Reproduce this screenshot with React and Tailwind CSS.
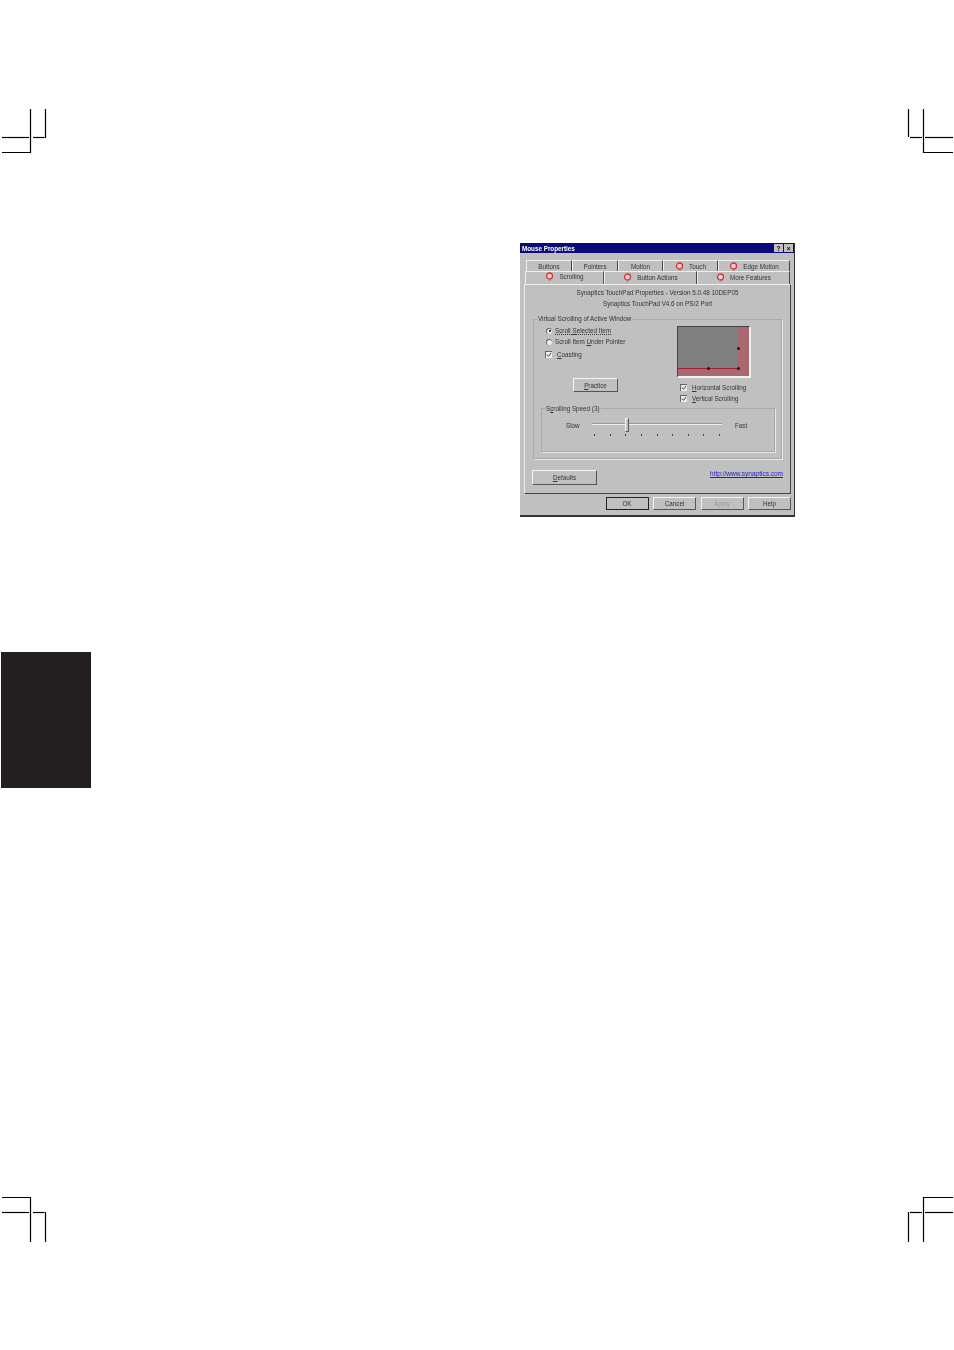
import React from "react";

const font = { fontFamily: '"Liberation Sans", Arial, sans-serif' };

const raised = "bg-[#c0c0c0] border border-t-[#f4f4f4] border-l-[#f4f4f4] border-r-[#555] border-b-[#555]";

function CropMarks() {
  // registration marks in the four page corners
  const lines = [
    "M30.5 109V152.5H2", "M2 137.5H29", "M33 137.5H44.5", "M45.5 109V138",
    "M908.5 109V137", "M910 137.5H922", "M925 137.5H953", "M923.5 109V152.5H953",
    "M2 1197.5H30.5V1242", "M2 1212.5H29", "M33 1212.5H44.5", "M45.5 1212V1242",
    "M953 1197.5H923.5V1242", "M925 1212.5H953", "M910 1212.5H922", "M908.5 1212V1242",
  ];
  return (
    <svg className="absolute top-0 left-0" width="954" height="1350" fill="none" stroke="#000" strokeWidth="1.2">
      {lines.map((d) => (
        <path key={d} d={d} />
      ))}
    </svg>
  );
}

function TabIcon() {
  return (
    <svg width="9" height="9" viewBox="0 0 9 9" className="shrink-0">
      <circle cx="4.5" cy="4" r="3" fill="#e8d0d0" stroke="#d83030" strokeWidth="1.3" />
      <path d="M3 8H6" stroke="#888" strokeWidth="1" />
    </svg>
  );
}

function Tab({ width, icon, active, children, className = "" }) {
  return (
    <div
      style={{ width }}
      className={`flex items-center justify-center gap-[5px] h-full border-t border-l border-r border-t-[#eee] border-l-[#eee] border-r-[#444] text-[#333] ${className} ${
        active ? "relative z-10 bg-[#c0c0c0] h-[15px] -mb-[2px] border-r-[#555]" : ""
      }`}>
      {icon && <TabIcon />}
      <span>{children}</span>
    </div>
  );
}

function Btn({ className, disabled, children }) {
  return (
    <div className={`flex items-center justify-center ${raised} ${disabled ? "text-[#999]" : "text-[#333]"} ${className}`}>
      {children}
    </div>
  );
}

function Check({ children, className }) {
  return (
    <div className={`flex items-center h-[11px] ${className}`}>
      <svg width="7" height="7" viewBox="0 0 7 7" className="bg-[#eee] border-t border-l border-[#666] mr-[5px]">
        <path d="M1 3L3 5L6 1" stroke="#222" strokeWidth="1" fill="none" />
      </svg>
      <span>{children}</span>
    </div>
  );
}

function Radio({ on, children }) {
  return (
    <div className="flex items-center h-[11px]">
      <span className="flex items-center justify-center w-[6px] h-[6px] ml-[1px] mr-[3px] rounded-full bg-[#eee] border-t border-l border-[#666]">
        {on && <span className="w-[2px] h-[2px] rounded-full bg-black" />}
      </span>
      {children}
    </div>
  );
}

function Preview() {
  return (
    <div className="relative w-[74px] h-[52px] bg-[#808080] border border-t-[#444] border-l-[#444] border-r-2 border-b-2 border-r-[#f2f2f2] border-b-[#f2f2f2] overflow-hidden">
      <div className="absolute top-0 right-0 bottom-0 w-[11px] bg-[#a86a70]" />
      <div className="absolute left-0 right-0 bottom-0 h-[8px] bg-[#a86a70]" />
      <div className="absolute left-0 right-[11px] bottom-[7px] h-[1px] bg-[#a02030]" />
      <div className="absolute left-[29px] bottom-[6px] w-[3px] h-[3px] rounded-full bg-[#201010]" />
      <div className="absolute right-[9px] bottom-[6px] w-[3px] h-[3px] rounded-full bg-[#201010]" />
      <div className="absolute right-[9px] top-[20px] w-[3px] h-[3px] rounded-full bg-[#201010]" />
    </div>
  );
}

function SpeedSlider() {
  return (
    <div className="relative w-[130px] h-[20px]">
      <div className="mt-[8px] h-[2px] bg-[#999] border-b border-[#eee]" />
      <div className="flex justify-between px-[2px] mt-[9px]">
        {[0, 1, 2, 3, 4, 5, 6, 7, 8].map((i) => (
          <span key={i} className="w-[1px] h-[2px] bg-[#444]" />
        ))}
      </div>
      <div className={`absolute left-[33px] top-[3px] w-[4px] h-[14px] ${raised}`} />
    </div>
  );
}

function MouseDialog() {
  return (
    <div className="w-[275px] h-[274px] ml-[520px] bg-[#c0c0c0] border-b-2 border-r border-[#333] text-[6.3px] leading-[11px] blur-[0.6px]">
      <div className="flex items-center justify-between h-[10px] pl-[2px] pr-[1px] bg-[#0a0a78]">
        <span className="text-white font-bold">Mouse Properties</span>
        <div className="flex gap-[1px]">
          <span className="flex items-center justify-center w-[9px] h-[8px] bg-[#c0c0c0] text-black font-bold">?</span>
          <span className="flex items-center justify-center w-[9px] h-[8px] bg-[#c0c0c0] text-black font-bold">×</span>
        </div>
      </div>

      <div className="flex h-[11px] mt-[7px] ml-[6px]">
        <Tab width={46}>Buttons</Tab>
        <Tab width={46}>Pointers</Tab>
        <Tab width={45}>Motion</Tab>
        <Tab width={55} icon>Touch</Tab>
        <Tab width={72} icon>Edge Motion</Tab>
      </div>
      <div className="flex items-start h-[13px] ml-[5px]">
        <Tab width={79} icon active className="pb-[4px]">Scrolling</Tab>
        <Tab width={93} icon className="pb-[2px]">Button Actions</Tab>
        <Tab width={93} icon className="pb-[2px]">More Features</Tab>
      </div>

      <div className="w-[267px] h-[210px] ml-[4px] pt-[2px] border border-t-[#eee] border-l-[#eee] border-r-[#444] border-b-[#444] text-[#333]">
        <p className="text-center">Synaptics TouchPad Properties - Version 5.0.48 10DEP05</p>
        <p className="text-center">Synaptics TouchPad V4.6 on PS/2 Port</p>

        <div className="relative w-[249px] h-[140px] mt-[10px] ml-[8px] pt-[5px] border border-[#a8a8a8] shadow-[1px_1px_0_#e8e8e8]">
          <span className="absolute -top-[7px] left-[3px] px-[1px] bg-[#c0c0c0]">Virtual Scrolling of Active Window</span>
          <div className="flex h-[83px]">
            <div className="w-[143px] pl-[11px]">
              <Radio on>
                <span className="underline decoration-dotted">Scroll <u>S</u>elected Item</span>
              </Radio>
              <Radio>
                <span>Scroll Item <u>U</u>nder Pointer</span>
              </Radio>
              <Check className="mt-[2px]"><u>C</u>oasting</Check>
              <Btn className="w-[45px] h-[14px] mt-[18px] ml-[28px]"><span><u>P</u>ractice</span></Btn>
            </div>
            <div className="pt-[1px]">
              <Preview />
              <Check className="mt-[4px] ml-[3px]"><u>H</u>orizontal Scrolling</Check>
              <Check className="ml-[3px]"><u>V</u>ertical Scrolling</Check>
            </div>
          </div>

          <div className="relative w-[234px] h-[44px] ml-[7px] pt-[6px] border border-[#a8a8a8] shadow-[1px_1px_0_#e8e8e8]">
            <span className="absolute -top-[6px] left-[3px] px-[1px] bg-[#c0c0c0]">S<u>c</u>rolling Speed (3)</span>
            <div className="flex items-center">
              <span className="w-[26px] ml-[24px]">Slow</span>
              <SpeedSlider />
              <span className="ml-[13px]">Fast</span>
            </div>
          </div>
        </div>

        <div className="flex items-start mt-[11px] ml-[7px]">
          <Btn className="w-[65px] h-[15px]"><span><u>D</u>efaults</span></Btn>
          <a className="ml-auto mr-[7px] -mt-[2px] text-[6.5px] text-[#2020c8] underline">http://www.synaptics.com</a>
        </div>
      </div>

      <div className="flex justify-end gap-[4.5px] mt-[3px] mr-[3px]">
        <Btn className="w-[43px] h-[13px] !border-[#222]">OK</Btn>
        <Btn className="w-[43px] h-[13px]">Cancel</Btn>
        <Btn className="w-[43px] h-[13px]" disabled>Apply</Btn>
        <Btn className="w-[43px] h-[13px]">Help</Btn>
      </div>
    </div>
  );
}

export default function App() {
  return (
    <div style={font} className="relative w-[954px] h-[1350px] pt-[243px] bg-white overflow-hidden">
      <CropMarks />
      <MouseDialog />
      {/* black chapter tab on the left edge */}
      <div className="w-[90px] h-[136px] mt-[135px] ml-[1px] bg-[#231f20]" />
    </div>
  );
}
